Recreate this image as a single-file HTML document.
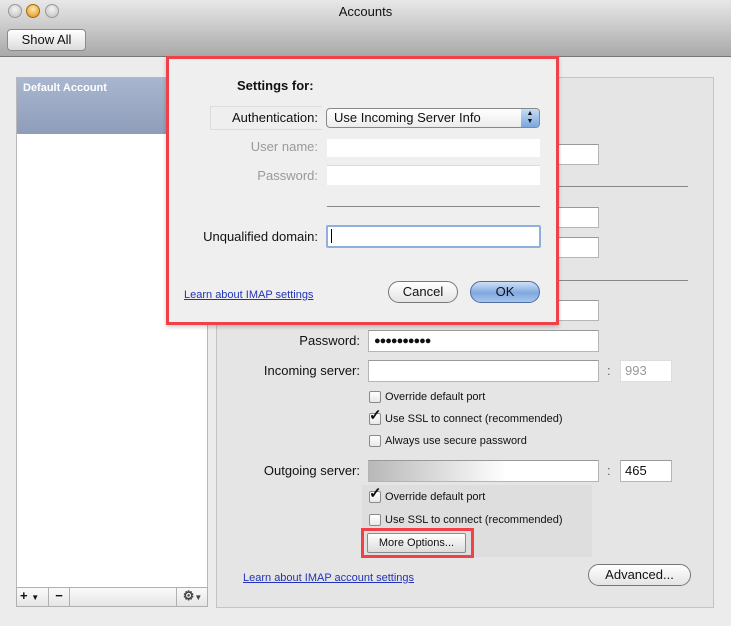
<!DOCTYPE html>
<html><head><meta charset="utf-8"><style>
*{box-sizing:border-box}
body{margin:0;width:731px;height:626px;background:#ececec;font-family:"Liberation Sans",sans-serif;font-size:12px;color:#111;position:relative;overflow:hidden}
.a{position:absolute}
.tb{left:0;top:0;width:731px;height:57px;background:linear-gradient(#e8e8e8,#a9a9a9);border-bottom:1px solid #777}
.dot{width:14px;height:14px;border-radius:50%;background:radial-gradient(circle at 50% 35%,#f4f4f4,#bdbdbd);border:1px solid #999;top:4px}
.btn{background:linear-gradient(#fff,#dcdcdc);border:1px solid #8a8a8a;border-radius:4px;text-align:center}
.pill{background:linear-gradient(#fff,#e4e4e4);border:1px solid #777;border-radius:11px;text-align:center;font-size:13px}
.f{background:#fff;border:1px solid #b5b5b5;border-top-color:#999}
.lbl{text-align:right;font-size:13px}
.cb{width:12px;height:12px;border:1px solid #8a8a8a;border-radius:2px;background:linear-gradient(#fff,#e8e8e8)}
.ct{font-size:11px}
a{color:#2232b8;text-decoration:underline;font-size:11px}
</style></head><body>
<div class="a tb"></div>
<div class="a dot" style="left:8px"></div>
<div class="a dot" style="left:26px;background:radial-gradient(circle at 50% 35%,#ffe9a8,#d98f1c);border-color:#a66a10"></div>
<div class="a dot" style="left:45px"></div>
<div class="a" style="left:0;width:731px;top:4px;text-align:center;font-size:13px">Accounts</div>
<div class="a btn" style="left:7px;top:29px;width:79px;height:22px;font-size:13px;line-height:20px">Show All</div>

<div class="a" style="left:16px;top:77px;width:192px;height:530px;background:#fff;border:1px solid #b8b8b8"></div>
<div class="a" style="left:17px;top:78px;width:191px;height:56px;background:linear-gradient(#a9b6cf,#8e9dba);color:#fff;font-weight:bold;font-size:11px;padding:4px 6px">Default Account</div>
<div class="a" style="left:16px;top:587px;width:192px;height:20px;background:linear-gradient(#fafafa,#e6e6e6);border:1px solid #b0b0b0;font-size:13px;font-weight:bold">
<span class="a" style="left:3px;top:0">+ <span style="font-size:8px">▼</span></span>
<span class="a" style="left:31px;top:0;border-left:1px solid #b0b0b0;height:18px;width:22px;border-right:1px solid #b0b0b0;text-align:center">−</span>
<span class="a" style="left:159px;top:0;border-left:1px solid #b0b0b0;height:18px;width:32px;text-align:center;color:#444">⚙<span style="font-size:8px">▼</span></span>
</div>

<div class="a" style="left:216px;top:77px;width:498px;height:531px;background:#e5e5e5;border:1px solid #c4c4c4"></div>
<div class="a" style="left:540px;top:186px;width:148px;height:1px;background:#888"></div>
<div class="a" style="left:540px;top:280px;width:148px;height:1px;background:#888"></div>
<div class="a f" style="left:540px;top:144px;width:59px;height:21px"></div>
<div class="a f" style="left:540px;top:207px;width:59px;height:21px"></div>
<div class="a f" style="left:540px;top:237px;width:59px;height:21px"></div>
<div class="a f" style="left:540px;top:300px;width:59px;height:21px"></div>

<div class="a lbl" style="left:220px;width:140px;top:333px">Password:</div>
<div class="a f" style="left:368px;top:330px;width:231px;height:22px;font-size:11px;line-height:20px;padding-left:5px;letter-spacing:-1px">●●●●●●●●●●</div>
<div class="a lbl" style="left:220px;width:140px;top:363px">Incoming server:</div>
<div class="a f" style="left:368px;top:360px;width:231px;height:22px"></div>
<div class="a" style="left:607px;top:363px;font-size:13px;color:#666">:</div>
<div class="a f" style="left:620px;top:360px;width:52px;height:22px;color:#999;font-size:13px;padding:2px 4px;border-color:#ddd">993</div>
<div class="a cb" style="left:369px;top:391px"></div><div class="a ct" style="left:385px;top:391px">Override default port</div>
<div class="a cb" style="left:369px;top:413px"></div><div class="a" style="left:369px;top:406px;font-size:15px;font-weight:bold">✓</div><div class="a ct" style="left:385px;top:413px">Use SSL to connect (recommended)</div>
<div class="a cb" style="left:369px;top:435px"></div><div class="a ct" style="left:385px;top:435px">Always use secure password</div>
<div class="a lbl" style="left:220px;width:140px;top:463px">Outgoing server:</div>
<div class="a f" style="left:368px;top:460px;width:231px;height:22px;background:linear-gradient(90deg,#b8b8b8,#fff 60%)"></div>
<div class="a" style="left:607px;top:463px;font-size:13px;color:#666">:</div>
<div class="a f" style="left:620px;top:460px;width:52px;height:22px;font-size:13px;padding:2px 4px">465</div>
<div class="a" style="left:362px;top:485px;width:230px;height:72px;background:#dedede"></div>
<div class="a cb" style="left:369px;top:491px"></div><div class="a" style="left:369px;top:484px;font-size:15px;font-weight:bold">✓</div><div class="a ct" style="left:385px;top:491px">Override default port</div>
<div class="a cb" style="left:369px;top:514px"></div><div class="a ct" style="left:385px;top:514px">Use SSL to connect (recommended)</div>
<div class="a" style="left:361px;top:528px;width:113px;height:30px;border:3px solid #f04048"></div>
<div class="a btn" style="left:367px;top:533px;width:99px;height:20px;font-size:11px;line-height:18px;border-radius:2px">More Options...</div>
<a class="a" style="left:243px;top:572px">Learn about IMAP account settings</a>
<div class="a pill" style="left:588px;top:564px;width:103px;height:22px;line-height:20px">Advanced...</div>

<div class="a" style="left:166px;top:56px;width:393px;height:269px;background:#efefef;border:3px solid #f04048;box-shadow:0 2px 4px rgba(0,0,0,.2)"></div>
<div class="a" style="left:237px;top:78px;font-weight:bold;font-size:13px">Settings for:</div>
<div class="a" style="left:210px;top:106px;width:112px;height:24px;border:1px solid #ddd;border-right:none"></div>
<div class="a lbl" style="left:170px;width:148px;top:110px">Authentication:</div>
<div class="a" style="left:326px;top:108px;width:214px;height:20px;background:linear-gradient(#fff,#ececec);border:1px solid #888;border-radius:4px;font-size:13px;padding:1px 7px">Use Incoming Server Info</div>
<div class="a" style="left:521px;top:109px;width:18px;height:18px;background:linear-gradient(#c9dcf5,#7aa6de);border-radius:0 3px 3px 0;font-size:7px;text-align:center;line-height:8px;padding-top:1px">▲<br>▼</div>
<div class="a lbl" style="left:170px;width:148px;top:139px;color:#999">User name:</div>
<div class="a" style="left:327px;top:139px;width:213px;height:18px;background:#fff"></div>
<div class="a lbl" style="left:170px;width:148px;top:168px;color:#999">Password:</div>
<div class="a" style="left:327px;top:165px;width:213px;height:20px;background:#fff;border-top:1px solid #ddd"></div>
<div class="a" style="left:327px;top:206px;width:213px;height:1px;background:#888"></div>
<div class="a lbl" style="left:170px;width:148px;top:229px">Unqualified domain:</div>
<div class="a" style="left:326px;top:225px;width:215px;height:23px;background:#fff;border:2px solid #8fb0dd;border-radius:2px"></div>
<div class="a" style="left:331px;top:229px;width:1px;height:14px;background:#000"></div>
<a class="a" style="left:184px;top:289px">Learn about IMAP settings</a>
<div class="a pill" style="left:388px;top:281px;width:70px;height:22px;line-height:20px">Cancel</div>
<div class="a pill" style="left:470px;top:281px;width:70px;height:22px;line-height:20px;background:linear-gradient(#cfe0f7,#7fa9e0 55%,#a9c6ee);border-color:#4d6e9e">OK</div>
</body></html>
